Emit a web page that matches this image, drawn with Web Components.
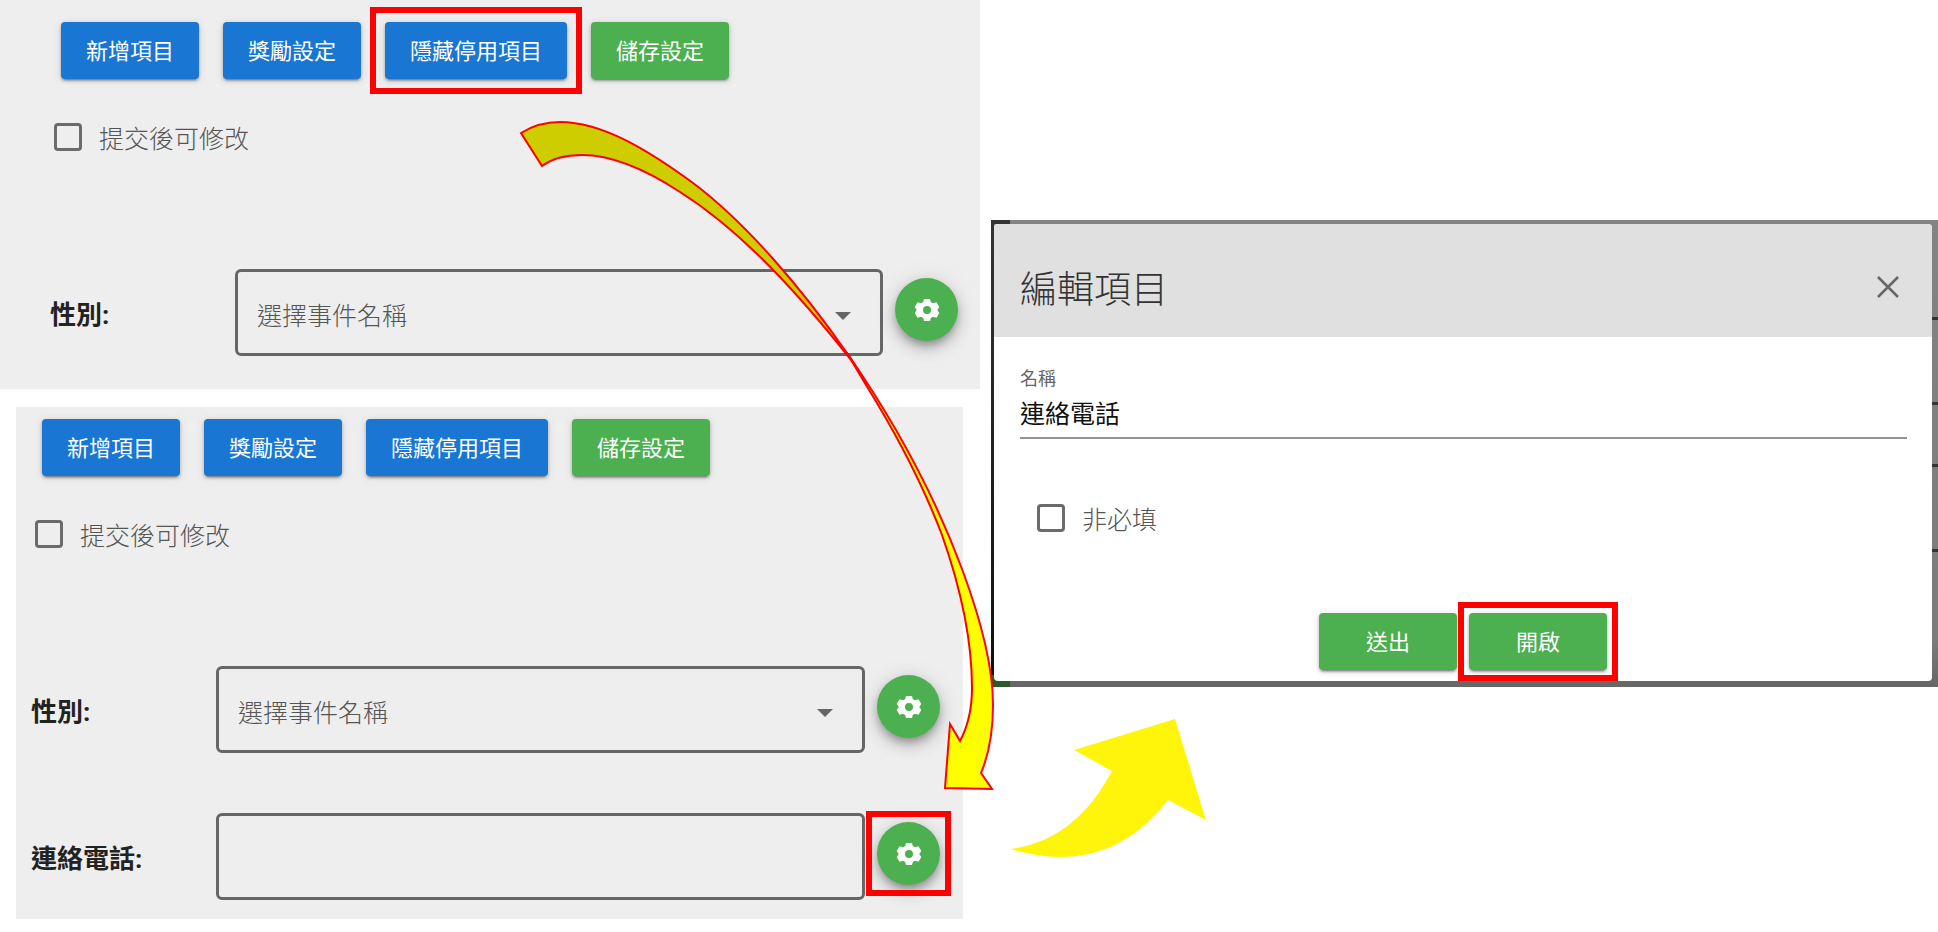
<!DOCTYPE html>
<html lang="zh-Hant">
<head>
  <meta charset="utf-8">
  <title>編輯項目</title>
  <style>
    body {
      margin: 0;
      background-color: #ffffff;
      font-family: Roboto, "Noto Sans CJK TC", sans-serif;
    }
  </style>
</head>
<body>
  <guide-page>
    <form-panel slot="form">
      <action-button slot="actions">新增項目</action-button>
      <action-button slot="actions">獎勵設定</action-button>
      <red-frame slot="actions" class="wide"><action-button>隱藏停用項目</action-button></red-frame>
      <action-button slot="actions" color="green">儲存設定</action-button>
      <check-box slot="option" label="提交後可修改"></check-box>
      <field-row type="select" label="性別:" placeholder="選擇事件名稱"></field-row>
    </form-panel>
    <form-panel slot="form" inset>
      <action-button slot="actions">新增項目</action-button>
      <action-button slot="actions">獎勵設定</action-button>
      <action-button slot="actions">隱藏停用項目</action-button>
      <action-button slot="actions" color="green">儲存設定</action-button>
      <check-box slot="option" label="提交後可修改"></check-box>
      <field-row type="select" label="性別:" placeholder="選擇事件名稱"></field-row>
      <field-row type="text" label="連絡電話:" framed></field-row>
    </form-panel>
    <edit-dialog slot="dialog" heading="編輯項目">
      <text-field label="名稱" value="連絡電話"></text-field>
      <check-box label="非必填"></check-box>
      <action-button slot="actions" color="green">送出</action-button>
      <red-frame slot="actions"><action-button color="green">開啟</action-button></red-frame>
    </edit-dialog>
    <guide-arrows slot="arrows"></guide-arrows>
  </guide-page>

  <script>
    class GuidePage extends HTMLElement {
      constructor() {
        super();
        this.attachShadow({ mode: "open" });
      }

      connectedCallback() {
        this.shadowRoot.innerHTML = `
          <style>
            :host {
              display: grid;
              grid-template-columns: 980fr 947fr;
              column-gap: 11px;
              align-items: start;
              position: relative;
            }
            .forms {
              display: flex;
              flex-direction: column;
              gap: 18px;
              min-width: 0;
            }
            .dialog {
              padding-top: 220px;
              min-width: 0;
            }
          </style>
          <div class="forms"><slot name="form"></slot></div>
          <div class="dialog"><slot name="dialog"></slot></div>
          <slot name="arrows"></slot>
        `;
      }
    }

    class FormPanel extends HTMLElement {
      constructor() {
        super();
        this.attachShadow({ mode: "open" });
      }

      connectedCallback() {
        this.shadowRoot.innerHTML = `
          <style>
            :host {
              display: block;
              background-color: #eeeeee;
              padding: 22px 22px 33px 50px;
            }
            :host([inset]) {
              margin: 0 17px 0 16px;
              padding: 12px 23px 19px 15px;
            }
            .actions {
              display: flex;
              gap: 24px;
              padding-left: 11px;
            }
            .option {
              padding: 42px 0 0 4px;
            }
            .rows {
              display: flex;
              flex-direction: column;
              gap: 60px;
              margin-top: 114px;
            }
          </style>
          <div class="actions"><slot name="actions"></slot></div>
          <div class="option"><slot name="option"></slot></div>
          <div class="rows"><slot></slot></div>
        `;
      }
    }

    class ActionButton extends HTMLElement {
      constructor() {
        super();
        this.attachShadow({ mode: "open" });
      }

      connectedCallback() {
        this.shadowRoot.innerHTML = `
          <style>
            :host {
              display: inline-flex;
              --button-color: #1976d2;
            }
            :host([color="green"]) {
              --button-color: #4caf50;
            }
            button {
              min-width: 138px;
              height: 57px;
              padding: 0 25px 3px;
              border: none;
              border-radius: 4px;
              background-color: var(--button-color);
              color: #ffffff;
              font-family: inherit;
              font-size: 22px;
              font-weight: 400;
              white-space: nowrap;
              cursor: pointer;
              box-shadow: 0 4px 2px -3px rgba(0, 0, 0, 0.3), 0 2px 3px 0 rgba(0, 0, 0, 0.25), 0 1px 8px 0 rgba(0, 0, 0, 0.12);
            }
          </style>
          <button type="button"><slot></slot></button>
        `;
      }
    }

    // Red outline drawn around whatever is slotted in
    class RedFrame extends HTMLElement {
      constructor() {
        super();
        this.attachShadow({ mode: "open" });
      }

      connectedCallback() {
        this.shadowRoot.innerHTML = `
          <style>
            :host {
              display: inline-flex;
              position: relative;
              --spread: -11px;
            }
            :host(.wide) {
              --spread: -15px;
            }
            :host::after {
              content: "";
              position: absolute;
              inset: var(--spread);
              border: 6px solid #ff0000;
              pointer-events: none;
            }
          </style>
          <slot></slot>
        `;
      }
    }

    class CheckBox extends HTMLElement {
      constructor() {
        super();
        this.attachShadow({ mode: "open" });
      }

      connectedCallback() {
        this.shadowRoot.innerHTML = `
          <style>
            :host {
              display: block;
            }
            label {
              display: inline-flex;
              align-items: center;
              gap: 17px;
              height: 32px;
              font-size: 25px;
              font-weight: 300;
              color: #555555;
              cursor: pointer;
            }
            input {
              appearance: none;
              width: 28px;
              height: 28px;
              margin: 0;
              border: 3px solid #6b6b6b;
              border-radius: 4px;
            }
            input:checked {
              background-color: #1976d2;
            }
          </style>
          <label><input type="checkbox">${this.getAttribute("label")}</label>
        `;
      }
    }

    class GearButton extends HTMLElement {
      constructor() {
        super();
        this.attachShadow({ mode: "open" });
      }

      connectedCallback() {
        this.shadowRoot.innerHTML = `
          <style>
            :host {
              display: inline-flex;
            }
            button {
              display: flex;
              align-items: center;
              justify-content: center;
              width: 63px;
              height: 63px;
              padding: 0;
              border: none;
              border-radius: 50%;
              background-color: #4caf50;
              cursor: pointer;
              box-shadow: 0 5px 8px -2px rgba(0, 0, 0, 0.3), 0 8px 16px 0 rgba(0, 0, 0, 0.16), 0 2px 24px 0 rgba(0, 0, 0, 0.1);
            }
            svg {
              width: 26px;
              height: 24px;
              fill: #ffffff;
            }
          </style>
          <button type="button" aria-label="設定">
            <svg viewBox="0 0 26 24" fill-rule="evenodd">
              <path d="M10 1H16L16.800 4L19 5.200L22.500 4.300L25.300 9L23.200 12L25.300 15L22.500 19.700L19 18.800L16.800 20L16 23H10L9.200 20L7 18.800L3.500 19.700L.7 15L2.800 12L.7 9L3.500 4.300L7 5.200L9.200 4ZM13 8A4 4 0 1 0 13 16A4 4 0 1 0 13 8Z"/>
            </svg>
          </button>
        `;
      }
    }

    class FieldRow extends HTMLElement {
      constructor() {
        super();
        this.attachShadow({ mode: "open" });
      }

      connectedCallback() {
        const gear = "<gear-button></gear-button>";
        this.shadowRoot.innerHTML = `
          <style>
            :host {
              display: grid;
              grid-template-columns: 185px 1fr 63px;
              align-items: center;
            }
            label {
              font-size: 26px;
              font-weight: 700;
              color: #222222;
              white-space: nowrap;
            }
            .box {
              position: relative;
              margin-right: 12px;
            }
            .box.arrow::after {
              content: "";
              position: absolute;
              right: 32px;
              top: 43px;
              border: 8px solid transparent;
              border-top-color: #666666;
              border-bottom: none;
              pointer-events: none;
            }
            select, input {
              appearance: none;
              display: block;
              box-sizing: border-box;
              width: 100%;
              height: 87px;
              margin: 0;
              padding: 8px 60px 0 19px;
              border: 3px solid #666666;
              border-radius: 6px;
              background-color: transparent;
              color: #555555;
              font-family: inherit;
              font-size: 25px;
              font-weight: 300;
            }
            .gear {
              display: flex;
              padding-bottom: 6px;
            }
          </style>
          <label for="field">${this.getAttribute("label")}</label>
          ${this.getAttribute("type") === "select"
            ? `<div class="box arrow"><select id="field"><option>${this.getAttribute("placeholder")}</option></select></div>`
            : `<div class="box"><input id="field" type="text"></div>`}
          <div class="gear">${this.hasAttribute("framed") ? `<red-frame>${gear}</red-frame>` : gear}</div>
        `;
      }
    }

    class TextField extends HTMLElement {
      constructor() {
        super();
        this.attachShadow({ mode: "open" });
      }

      connectedCallback() {
        this.shadowRoot.innerHTML = `
          <style>
            :host {
              display: flex;
              flex-direction: column;
            }
            label {
              font-size: 18px;
              line-height: 24px;
              color: #666666;
            }
            input {
              height: 42px;
              padding: 0 0 4px;
              border: none;
              border-bottom: 2px solid #949494;
              background-color: transparent;
              color: #111111;
              font-family: inherit;
              font-size: 25px;
            }
          </style>
          <label for="field">${this.getAttribute("label")}</label>
          <input id="field" type="text" value="${this.getAttribute("value")}">
        `;
      }
    }

    class EditDialog extends HTMLElement {
      constructor() {
        super();
        this.attachShadow({ mode: "open" });
      }

      connectedCallback() {
        this.shadowRoot.innerHTML = `
          <style>
            /* Strip of the dimmed page that shows round the dialog */
            :host {
              display: block;
              padding: 4px 6px 6px 3px;
              background:
                linear-gradient(#323534, #323534) 0 0 / 19px 4px no-repeat,
                linear-gradient(#2b5a2d, #2b5a2d) 0 100% / 19px 12px no-repeat,
                linear-gradient(#323534, #0c100e) 0 0 / 3px 100% no-repeat,
                linear-gradient(#333333, #333333) 100% 97px / 6px 3px no-repeat,
                linear-gradient(#333333, #333333) 100% 182px / 6px 3px no-repeat,
                linear-gradient(#333333, #333333) 100% 244px / 6px 3px no-repeat,
                linear-gradient(#333333, #333333) 100% 329px / 6px 3px no-repeat,
                linear-gradient(#838383, #7b7b7b 90%, #666666);
            }
            section {
              border-radius: 4px;
              background-color: #ffffff;
              overflow: hidden;
            }
            header {
              display: flex;
              align-items: center;
              justify-content: space-between;
              height: 113px;
              padding: 12px 32px 0 26px;
              box-sizing: border-box;
              background-color: #e0e0e0;
            }
            h2 {
              margin: 0;
              font-size: 37px;
              font-weight: 300;
              color: #333333;
            }
            .close {
              display: flex;
              padding: 0;
              border: none;
              background-color: transparent;
              cursor: pointer;
            }
            .close svg {
              width: 24px;
              height: 24px;
              fill: none;
              stroke: #666666;
              stroke-width: 2.500;
            }
            .body {
              display: flex;
              flex-direction: column;
              gap: 63px;
              padding: 30px 25px 77px 26px;
            }
            .body ::slotted(check-box) {
              padding-left: 17px;
            }
            footer {
              display: flex;
              justify-content: center;
              gap: 12px;
              padding-bottom: 11px;
            }
          </style>
          <section role="dialog" aria-labelledby="heading">
            <header>
              <h2 id="heading">${this.getAttribute("heading")}</h2>
              <button class="close" type="button" aria-label="關閉">
                <svg viewBox="0 0 24 24"><path d="M2 2L22 22M22 2L2 22"/></svg>
              </button>
            </header>
            <div class="body"><slot></slot></div>
            <footer><slot name="actions"></slot></footer>
          </section>
        `;
      }
    }

    // Arrows that lead from one step to the next
    class GuideArrows extends HTMLElement {
      constructor() {
        super();
        this.attachShadow({ mode: "open" });
      }

      connectedCallback() {
        this.shadowRoot.innerHTML = `
          <style>
            :host {
              display: block;
              position: absolute;
              top: 0;
              left: 0;
              width: 100%;
              pointer-events: none;
            }
            svg {
              display: block;
              width: 100%;
            }
            .step {
              stroke: #ff0000;
              stroke-width: 2;
            }
          </style>
          <svg viewBox="0 0 1938 932" aria-hidden="true">
            <path class="step" fill="#cdcd00" d="M521 133C532 126 545 122 560 122C602 122 648 150 693 183C745 222 800 286 847 353L855 365C800 295 743 232 680 192C645 169 612 155 582 155C567 155 553 158 542 166Z"/>
            <path class="step" fill="#ffff00" d="M847 353C895 422 934 494 962 569C981 620 993 667 993 705C993 732 989 754 981 773L992 789L945 788L950 724L960 741C968 726 972 708 972 688C972 640 960 586 942 535C923 485 897 435 866 385Z"/>
            <path fill="#fff50a" d="M1010 849C1056 843 1088 816 1112 771L1074 750L1175 719L1206 820L1168 800C1133 845 1095 857 1060 857C1042 857 1025 853 1010 849Z"/>
          </svg>
        `;
      }
    }

    customElements.define("guide-page", GuidePage);
    customElements.define("form-panel", FormPanel);
    customElements.define("action-button", ActionButton);
    customElements.define("red-frame", RedFrame);
    customElements.define("check-box", CheckBox);
    customElements.define("gear-button", GearButton);
    customElements.define("field-row", FieldRow);
    customElements.define("text-field", TextField);
    customElements.define("edit-dialog", EditDialog);
    customElements.define("guide-arrows", GuideArrows);
  </script>
</body>
</html>
